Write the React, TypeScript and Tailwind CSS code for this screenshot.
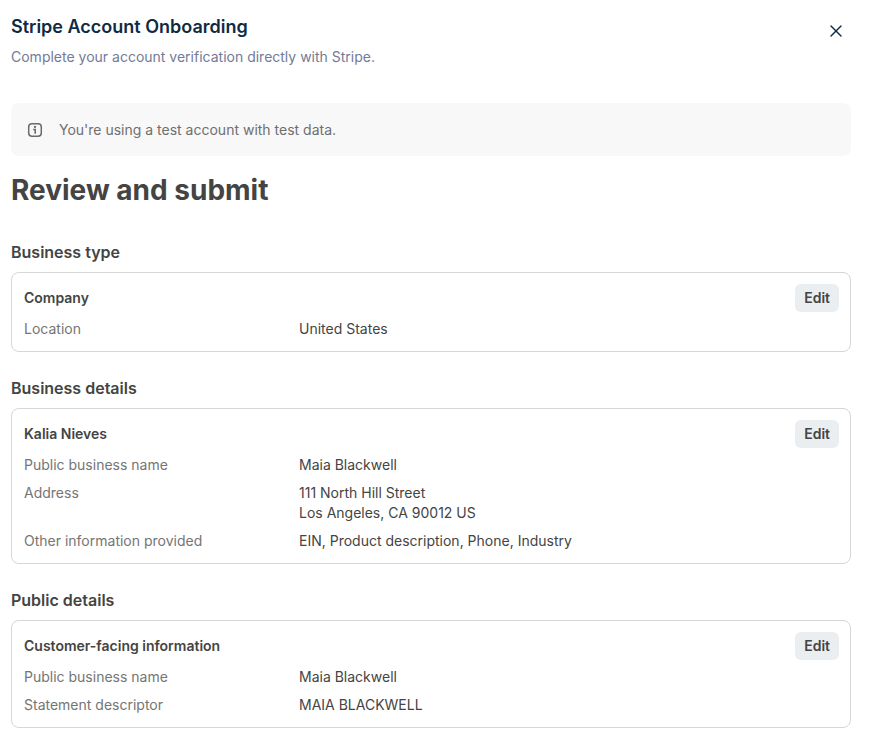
import React from 'react';
import { X } from 'lucide-react';

interface DetailRow {
  label: string;
  value: string[];
}

interface ReviewSectionProps {
  heading: string;
  title: string;
  rows: DetailRow[];
}

const sections: ReviewSectionProps[] = [
  {
    heading: 'Business type',
    title: 'Company',
    rows: [{ label: 'Location', value: ['United States'] }],
  },
  {
    heading: 'Business details',
    title: 'Kalia Nieves',
    rows: [
      { label: 'Public business name', value: ['Maia Blackwell'] },
      { label: 'Address', value: ['111 North Hill Street', 'Los Angeles, CA 90012 US'] },
      { label: 'Other information provided', value: ['EIN, Product description, Phone, Industry'] },
    ],
  },
  {
    heading: 'Public details',
    title: 'Customer-facing information',
    rows: [
      { label: 'Public business name', value: ['Maia Blackwell'] },
      { label: 'Statement descriptor', value: ['MAIA BLACKWELL'] },
    ],
  },
];

const InfoIcon: React.FC = () => (
  <svg width="16" height="16" viewBox="0 0 16 16" fill="none" aria-hidden="true">
    <rect x="1.7" y="1.7" width="12.6" height="12.6" rx="3.2" stroke="#6b6b6b" strokeWidth="1.5" />
    <path d="M6.2 7.5H8.2V11.8" stroke="#6b6b6b" strokeWidth="1.6" />
    <circle cx="8" cy="4.9" r="1.15" fill="#6b6b6b" />
  </svg>
);

const ReviewSection: React.FC<ReviewSectionProps> = ({ heading, title, rows }) => {
  return (
    <section>
      <h3 className="text-base leading-6 font-semibold">{heading}</h3>
      <div className="mt-2 rounded-lg border border-[#d6d6d6] pt-[11px] pr-[11px] pb-3 pl-3">
        <div className="flex items-center justify-between">
          <h4 className="text-sm leading-5 font-semibold">{title}</h4>
          <button
            type="button"
            aria-label={`Edit ${title}`}
            className="h-7 px-[9px] rounded-md bg-[#ebeef1] text-sm leading-5 font-semibold"
          >
            Edit
          </button>
        </div>
        <dl className="mt-[7px] flex flex-col gap-2 text-sm leading-5">
          {rows.map((row) => (
            <div key={row.label} className="grid grid-cols-[275px_1fr]">
              <dt className="text-[#757575]">{row.label}</dt>
              <dd>
                {row.value.map((line) => (
                  <p key={line}>{line}</p>
                ))}
              </dd>
            </div>
          ))}
        </dl>
      </div>
    </section>
  );
};

export default function App() {
  return (
    <div className="min-h-screen bg-white pl-[11px] pr-[19px] pt-3 pb-2 font-['Inter',sans-serif] text-[#444444]">
      {/* Header */}
      <header className="flex items-start justify-between">
        <div>
          <h1 className="text-lg leading-[30px] font-semibold text-[#0f2a43]">Stripe Account Onboarding</h1>
          <p className="mt-1 text-sm leading-[22px] text-[#737b97]">
            Complete your account verification directly with Stripe.
          </p>
        </div>
        <button type="button" aria-label="Close" className="mt-[5px] mr-px p-1 text-[#0f2a43]">
          <X size={20} strokeWidth={1.75} />
        </button>
      </header>

      {/* Test mode notice */}
      <div className="mt-[35px] flex items-center gap-4 rounded-lg bg-[#f8f8f8] px-4 py-4 text-sm leading-[21px] text-[#6f6f6f]">
        <InfoIcon />
        <p>You're using a test account with test data.</p>
      </div>

      <h2 className="mt-4 text-[28px] leading-9 font-bold">Review and submit</h2>

      <div className="mt-8 flex flex-col gap-6">
        {sections.map((section) => (
          <ReviewSection key={section.heading} {...section} />
        ))}
      </div>
    </div>
  );
}
